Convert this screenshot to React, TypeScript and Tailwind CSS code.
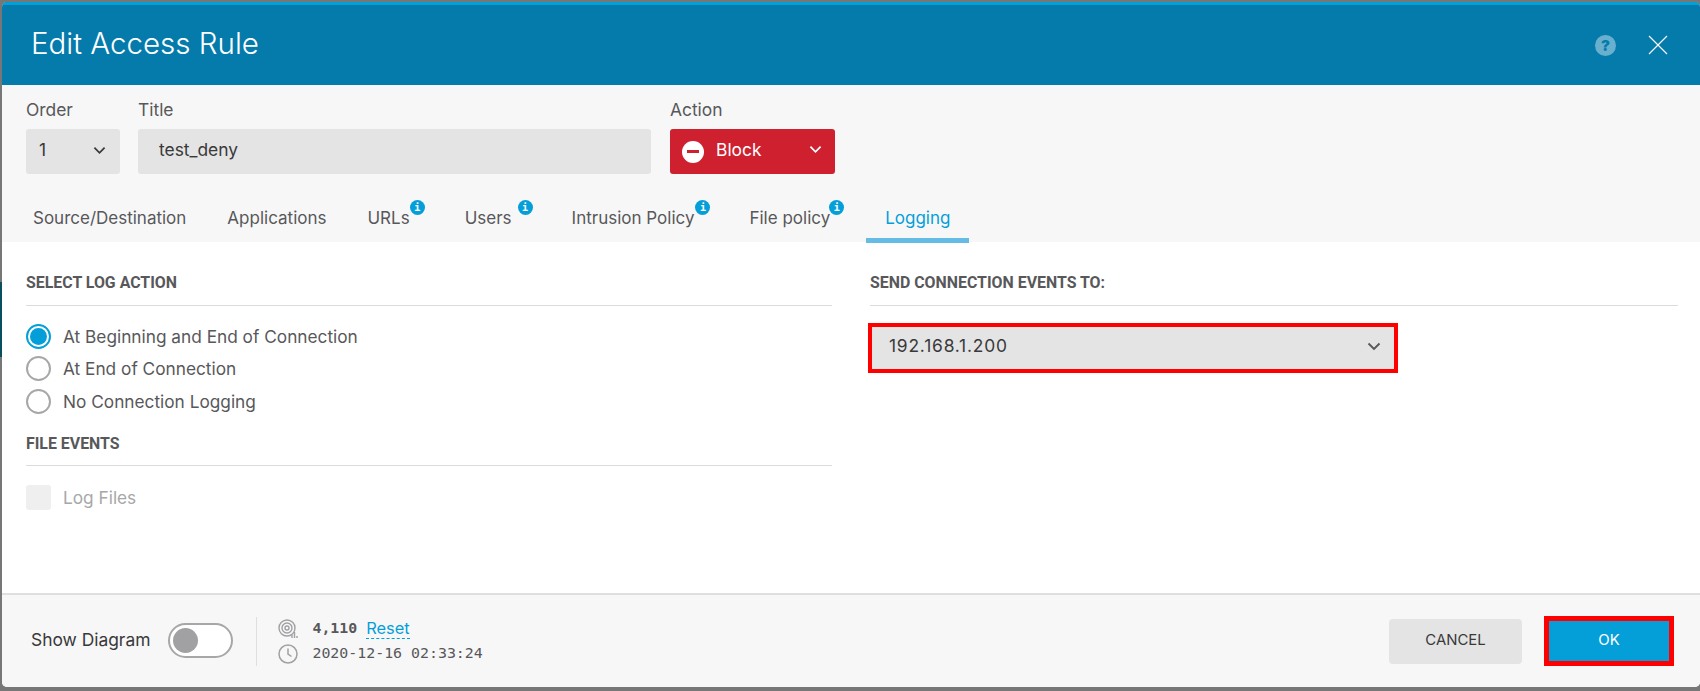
import React from "react";

const font = { fontFamily: "Inter, 'Liberation Sans', sans-serif" };

function Chevron({ className }: { className: string }) {
  return (
    <svg viewBox="0 0 14 9" className={className} fill="none" stroke="currentColor" strokeWidth="1.9">
      <path d="M1.5 1.5 7 7l5.5-5.5" />
    </svg>
  );
}

function Info({ className }: { className: string }) {
  return (
    <span className={`flex h-[15px] w-[15px] items-center justify-center rounded-full bg-[#049fd9] font-['DejaVu_Sans_Mono'] text-[10px] font-bold leading-none text-white ${className}`}>
      i
    </span>
  );
}

function Tab({ label, info, active, ml }: { label: string; info?: string; active?: boolean; ml: string }) {
  return (
    <div className={`relative flex h-[47px] items-center ${ml} ${active ? "text-[#049fd9]" : "text-[#58585b]"}`}>
      <span className="pt-[2px] text-[17px] leading-none">{label}</span>
      {info && <Info className={`absolute top-[6px] ${info}`} />}
      {active && <span className="absolute bottom-[-2px] left-[-19px] right-[-19px] h-[5px] bg-[#64bbe3]" />}
    </div>
  );
}

function Radio({ label, on }: { label: string; on?: boolean }) {
  return (
    <div className="flex h-[32.5px] items-center">
      <span className={`flex h-[25px] w-[25px] items-center justify-center rounded-full border-2 bg-white ${on ? "border-[#049fd9]" : "border-[#a7a7a9]"}`}>
        {on && <span className="h-[17px] w-[17px] rounded-full bg-[#049fd9]" />}
      </span>
      <span className="ml-[12px] text-[17.25px] leading-none text-[#58585b]">{label}</span>
    </div>
  );
}

const heading = "font-['Roboto'] text-[15.9px] font-bold leading-[20px] text-[#58585b]";

export default function App() {
  return (
    <div className="relative flex h-[691px] w-[1700px] flex-col overflow-hidden bg-[#777777] pb-[4px] pl-[2px] pt-[2px]" style={font}>
      <span className="absolute left-0 top-[282px] h-[75px] w-[2px] bg-[#0a4f5e]" />
      <div className="flex min-h-0 flex-1 flex-col overflow-hidden rounded-[5px] bg-white">
        <header className="flex h-[83px] shrink-0 items-center border-t-[3px] border-[#049fd9] bg-[#057bac] pl-[29px] pr-[32px] text-white">
          <h1 className="flex-1 pb-[3px] text-[29.5px] font-light leading-none">Edit Access Rule</h1>
          <span className="mr-[32px] flex h-[21px] w-[21px] items-center justify-center rounded-full bg-[#69b0cf] text-[15px] font-black leading-none text-[#057bac]">?</span>
          <svg viewBox="0 0 20 20" className="h-[20px] w-[20px]" fill="none" stroke="white" strokeWidth="1.1">
            <path d="M1 1l18 18M19 1 1 19" />
          </svg>
        </header>

        <section className="h-[157px] shrink-0 bg-[#f7f7f7] pl-[24px]">
          <div className="flex pt-[14px]">
            <div className="w-[94px]">
              <div className="h-[30px] pt-[2px] text-[17.4px] leading-none text-[#58585b]">Order</div>
              <div className="flex h-[45px] items-center justify-between rounded-[3px] bg-[#e4e4e4] pb-[3px] pl-[13px] pr-[14px] text-[17.4px] text-[#39393b]">
                1
                <Chevron className="h-[9px] w-[13px] text-[#39393b]" />
              </div>
            </div>
            <div className="ml-[18px] w-[513px]">
              <div className="h-[30px] pt-[2px] text-[17.4px] leading-none text-[#58585b]">Title</div>
              <div className="flex h-[45px] items-center rounded-[3px] bg-[#e4e4e4] pb-[3px] pl-[21px] text-[17.4px] text-[#39393b]">test_deny</div>
            </div>
            <div className="ml-[19px] w-[165px]">
              <div className="h-[30px] pt-[2px] text-[17.4px] leading-none text-[#58585b]">Action</div>
              <div className="flex h-[45px] items-center rounded-[3px] bg-[#cf2030] pl-[12px] pr-[13px] text-[17.4px] text-white">
                <span className="flex h-[22px] w-[22px] items-center justify-center rounded-full bg-white">
                  <span className="h-[3px] w-[12px] bg-[#cf2030]" />
                </span>
                <span className="ml-[12px] flex-1 pb-[3px]">Block</span>
                <Chevron className="mb-[4px] h-[9px] w-[13px] text-white" />
              </div>
            </div>
          </div>
          <nav className="mt-[20px] flex pl-[7px]">
            <Tab label="Source/Destination" ml="" />
            <Tab label="Applications" ml="ml-[41px]" />
            <Tab label="URLs" info="right-[-15px]" ml="ml-[41px]" />
            <Tab label="Users" info="right-[-21px]" ml="ml-[55px]" />
            <Tab label="Intrusion Policy" info="right-[-16px]" ml="ml-[60px]" />
            <Tab label="File policy" info="right-[-14px]" ml="ml-[55px]" />
            <Tab label="Logging" active ml="ml-[55px]" />
          </nav>
        </section>

        <main className="flex min-h-0 flex-1 pl-[24px] pr-[22px] pt-[31px]">
          <div className="w-[806px]">
            <h2 className={`h-[33px] border-b border-[#dcdcdc] ${heading}`}>SELECT LOG ACTION</h2>
            <div className="pt-[14px]">
              <Radio label="At Beginning and End of Connection" on />
              <Radio label="At End of Connection" />
              <Radio label="No Connection Logging" />
            </div>
            <h2 className={`mt-[16px] h-[32px] border-b border-[#dcdcdc] ${heading}`}>FILE EVENTS</h2>
            <div className="mt-[19px] flex items-center">
              <span className="h-[25px] w-[25px] rounded-[3px] bg-[#efefef]" />
              <span className="ml-[12px] pt-[1px] text-[17.25px] leading-none text-[#a7a7a9]">Log Files</span>
            </div>
          </div>
          <div className="ml-[38px] flex-1">
            <h2 className={`h-[33px] border-b border-[#dcdcdc] ${heading}`}>SEND CONNECTION EVENTS TO:</h2>
            <div className="ml-[-2px] mt-[17px] flex h-[50px] w-[530px] items-center justify-between border-[4px] border-[#ff0000] bg-[#e4e4e4] pb-[3px] pl-[17px] pr-[13px] text-[17.4px] tracking-[0.8px] text-[#39393b]">
              192.168.1.200
              <Chevron className="h-[9px] w-[14px] text-[#58585b]" />
            </div>
          </div>
        </main>

        <footer className="flex h-[94px] shrink-0 items-center border-t-2 border-[#dfdfdf] bg-[#f7f7f7] pl-[29px] pr-[26px]">
          <span className="pb-[2px] text-[17.4px] leading-none text-[#39393b]">Show Diagram</span>
          <span className="mb-[2px] ml-[18px] flex h-[35px] w-[65px] items-center rounded-full border-2 border-[#a7a7a9] bg-white pl-[3px]">
            <span className="h-[25px] w-[25px] rounded-full bg-[#a1a1a4]" />
          </span>
          <span className="ml-[23px] h-[49px] w-[1px] bg-[#dfdfdf]" />
          <div className="ml-[21px] flex flex-col gap-[3px]">
            <div className="flex h-[22px] items-center">
              <svg viewBox="0 0 20 20" className="h-[20px] w-[20px]" fill="none" stroke="#a1a1a4" strokeWidth="1.4">
                <circle cx="9" cy="9" r="8" />
                <circle cx="9" cy="9" r="5" />
                <circle cx="9" cy="9" r="2" />
                <path d="M14 19v-3M16.5 19v-6M19 19v-2" />
              </svg>
              <span className="ml-[14px] font-['DejaVu_Sans_Mono'] text-[14.9px] font-bold leading-none text-[#58585b]">4,110</span>
              <span className="ml-[9px] border-b border-dashed border-[#049fd9] text-[16.4px] leading-[19px] text-[#049fd9]">Reset</span>
            </div>
            <div className="flex h-[22px] items-center">
              <svg viewBox="0 0 20 20" className="h-[20px] w-[20px]" fill="none" stroke="#a1a1a4" strokeWidth="1.5">
                <circle cx="10" cy="10" r="9" />
                <path d="M10 4.5V10l3.5 2.5" />
              </svg>
              <span className="ml-[14px] font-['DejaVu_Sans_Mono'] text-[14.9px] leading-none text-[#58585b]">2020-12-16 02:33:24</span>
            </div>
          </div>
          <div className="flex-1" />
          <button className="flex h-[45px] w-[133px] items-center justify-center rounded-[4px] bg-[#e4e4e4] pb-[1px] text-[14.9px] text-[#39393b]">CANCEL</button>
          <button className="ml-[22px] flex h-[50px] w-[130px] items-center justify-center border-[5px] border-[#ff0000] bg-[#049fd9] pb-[1px] text-[14.9px] text-white">OK</button>
        </footer>
      </div>
    </div>
  );
}
